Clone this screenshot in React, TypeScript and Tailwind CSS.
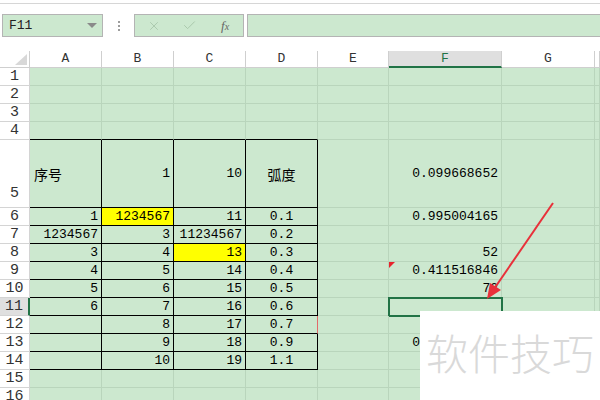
import { X, Check } from "lucide-react";

type Row = { n: number; h: string; cells: string[] };

const ROWS: Row[] = [
  { n: 1, h: "h-[18px]", cells: [] },
  { n: 2, h: "h-[18px]", cells: [] },
  { n: 3, h: "h-[18px]", cells: [] },
  { n: 4, h: "h-[18px]", cells: [] },
  { n: 5, h: "h-[68px]", cells: ["序号", "1", "10", "弧度", "", "0.099668652", ""] },
  { n: 6, h: "h-[18px]", cells: ["1", "1234567", "11", "0.1", "", "0.995004165", ""] },
  { n: 7, h: "h-[18px]", cells: ["1234567", "3", "11234567", "0.2", "", "", ""] },
  { n: 8, h: "h-[18px]", cells: ["3", "4", "13", "0.3", "", "52", ""] },
  { n: 9, h: "h-[18px]", cells: ["4", "5", "14", "0.4", "", "0.411516846", ""] },
  { n: 10, h: "h-[18px]", cells: ["5", "6", "15", "0.5", "", "72", ""] },
  { n: 11, h: "h-[18px]", cells: ["6", "7", "16", "0.6", "", "", ""] },
  { n: 12, h: "h-[18px]", cells: ["", "8", "17", "0.7", "", "", ""] },
  { n: 13, h: "h-[18px]", cells: ["", "9", "18", "0.9", "", "0.621609968", ""] },
  { n: 14, h: "h-[18px]", cells: ["", "10", "19", "1.1", "", "", ""] },
  { n: 15, h: "h-[18px]", cells: [] },
  { n: 16, h: "h-[18px]", cells: [] },
];

const COLS = [
  { name: "A", w: "w-[72px]" },
  { name: "B", w: "w-[72px]" },
  { name: "C", w: "w-[72px]" },
  { name: "D", w: "w-[72px]" },
  { name: "E", w: "w-[71px]" },
  { name: "F", w: "w-[113px]" },
  { name: "G", w: "w-[93px]" },
  { name: "", w: "flex-1" },
];

const MONO = "font-['Liberation_Mono','DejaVu_Sans_Mono',monospace] text-[13px]";
const CJK = "font-['Noto_Sans_CJK_SC',sans-serif] text-[14px]";

function Cell({ row, ci }: { row: Row; ci: number }) {
  const text = row.cells[ci] ?? "";
  const inTable = ci <= 3 && row.n >= 5 && row.n <= 14;
  const right =
    inTable && ci === 3 && row.n === 12
      ? "border-r-[#e26a6a]"
      : inTable
        ? "border-r-black"
        : "border-r-[#b9d5bc]";
  const bottom = ci <= 3 && row.n >= 4 && row.n <= 14 ? "border-b-black" : "border-b-[#b9d5bc]";
  const yellow = (row.n === 6 && ci === 1) || (row.n === 8 && ci === 2);
  const isCjk = /[\u4e00-\u9fff]/.test(text);
  const align = ci === 3 ? "justify-center" : row.n === 5 && ci === 0 ? "justify-start pl-[4px]" : "justify-end pr-[3px]";

  return (
    <div
      className={`relative ${COLS[ci].w} shrink-0 h-full border-r border-b ${right} ${bottom} ${
        yellow ? "bg-[#ffff00]" : ""
      } flex items-center pt-px ${align} ${isCjk ? CJK : MONO} text-black whitespace-nowrap`}
    >
      {text}
      {row.n === 11 && ci === 5 && (
        <div className="absolute -left-px -top-px w-[115px] h-[20px] border-2 border-[#217346]" />
      )}
      {row.n === 9 && ci === 5 && (
        <svg className="absolute left-0 top-0" width="7" height="7" viewBox="0 0 7 7">
          <polygon points="0,0 6,0 0,6" fill="#e8242c" />
        </svg>
      )}
    </div>
  );
}

export default function App() {
  return (
    <div className="relative w-[600px] h-[400px] overflow-hidden bg-white">
      {/* toolbar */}
      <div className="h-[48px]">
        <div className="mt-[3px] border-t border-[#d6d6d6]" />
        <div className="mt-[10px] flex h-[23px] items-stretch">
          <div className="ml-[2px] w-[101px] border border-[#b4b4b4] bg-[#cce8cf] flex items-center pl-[6px] pr-[5px]">
            <span className={`${MONO} text-[#222] pt-px`}>F11</span>
            <span className="ml-auto w-0 h-0 border-l-[5px] border-r-[5px] border-t-[5px] border-l-transparent border-r-transparent border-t-[#8a8a8a]" />
          </div>
          <div className="w-[31px] flex flex-col items-center justify-center gap-[2px]">
            <span className="w-[2px] h-[2px] bg-[#9d9d9d]" />
            <span className="w-[2px] h-[2px] bg-[#9d9d9d]" />
            <span className="w-[2px] h-[2px] bg-[#9d9d9d]" />
          </div>
          <div className="w-[110px] border border-[#b4b4b4] bg-[#cce8cf] flex items-center">
            <X size={14} strokeWidth={1.5} className="ml-[12px] text-[#a7c6aa]" />
            <Check size={15} strokeWidth={1.5} className="ml-[21px] text-[#a7c6aa]" />
            <span className="ml-[24px] font-['Liberation_Serif',serif] italic text-[13px] text-[#666] leading-none">
              f<span className="text-[10px]">x</span>
            </span>
          </div>
          <div className="ml-[3px] flex-1 border border-r-0 border-[#b4b4b4] bg-[#cce8cf]" />
        </div>
      </div>

      {/* column headers */}
      <div className="flex h-[17px] bg-white">
        <div className="w-[30px] shrink-0 border-r border-b border-[#cfcfcf] relative">
          <svg className="absolute left-[15px] top-[3px]" width="12" height="11" viewBox="0 0 12 11">
            <polygon points="12,0 12,11 0,11" fill="#d8d8d8" />
          </svg>
        </div>
        {COLS.map((c, i) => (
          <div
            key={i}
            className={`${c.w} shrink-0 flex items-center justify-center ${MONO} ${
              c.name === "F"
                ? "bg-[#dfdfdf] text-[#217346] border-b-2 border-b-[#217346] border-r border-r-[#cfcfcf]"
                : "text-[#333] border-r border-b border-[#cfcfcf]"
            }`}
          >
            {c.name}
          </div>
        ))}
      </div>

      {/* rows */}
      {ROWS.map((row) => (
        <div key={row.n} className={`flex ${row.h}`}>
          <div
            className={`w-[30px] shrink-0 flex justify-center ${row.n === 5 ? "items-end pb-[2px]" : "items-center pt-px"} ${MONO} text-[15px] text-[#333] border-b border-[#d4d4d4] ${
              row.n === 11 ? "bg-[#dfdfdf] border-r-2 border-r-[#217346]" : "border-r bg-white"
            }`}
          >
            {row.n}
          </div>
          <div className="flex flex-1 bg-[#cce8cf]">
            {COLS.map((c, ci) => (
              <Cell key={ci} row={row} ci={ci} />
            ))}
          </div>
        </div>
      ))}

      {/* watermark panel */}
      <div className="absolute left-[420px] top-[311px] w-[180px] h-[89px] bg-white flex items-start pl-[6px] pt-[20px]">
        <span className="font-['Noto_Sans_CJK_SC',sans-serif] font-light text-[42px] leading-none text-[#d9d9d9]">
          软件技巧
        </span>
      </div>

      {/* red arrow */}
      <svg className="absolute left-0 top-0 pointer-events-none" width="600" height="400" viewBox="0 0 600 400">
        <line x1="553" y1="203" x2="494" y2="289" stroke="#e8313a" strokeWidth="2" />
        <polygon points="487,299 501,290 490,283" fill="#e8313a" />
      </svg>
    </div>
  );
}
